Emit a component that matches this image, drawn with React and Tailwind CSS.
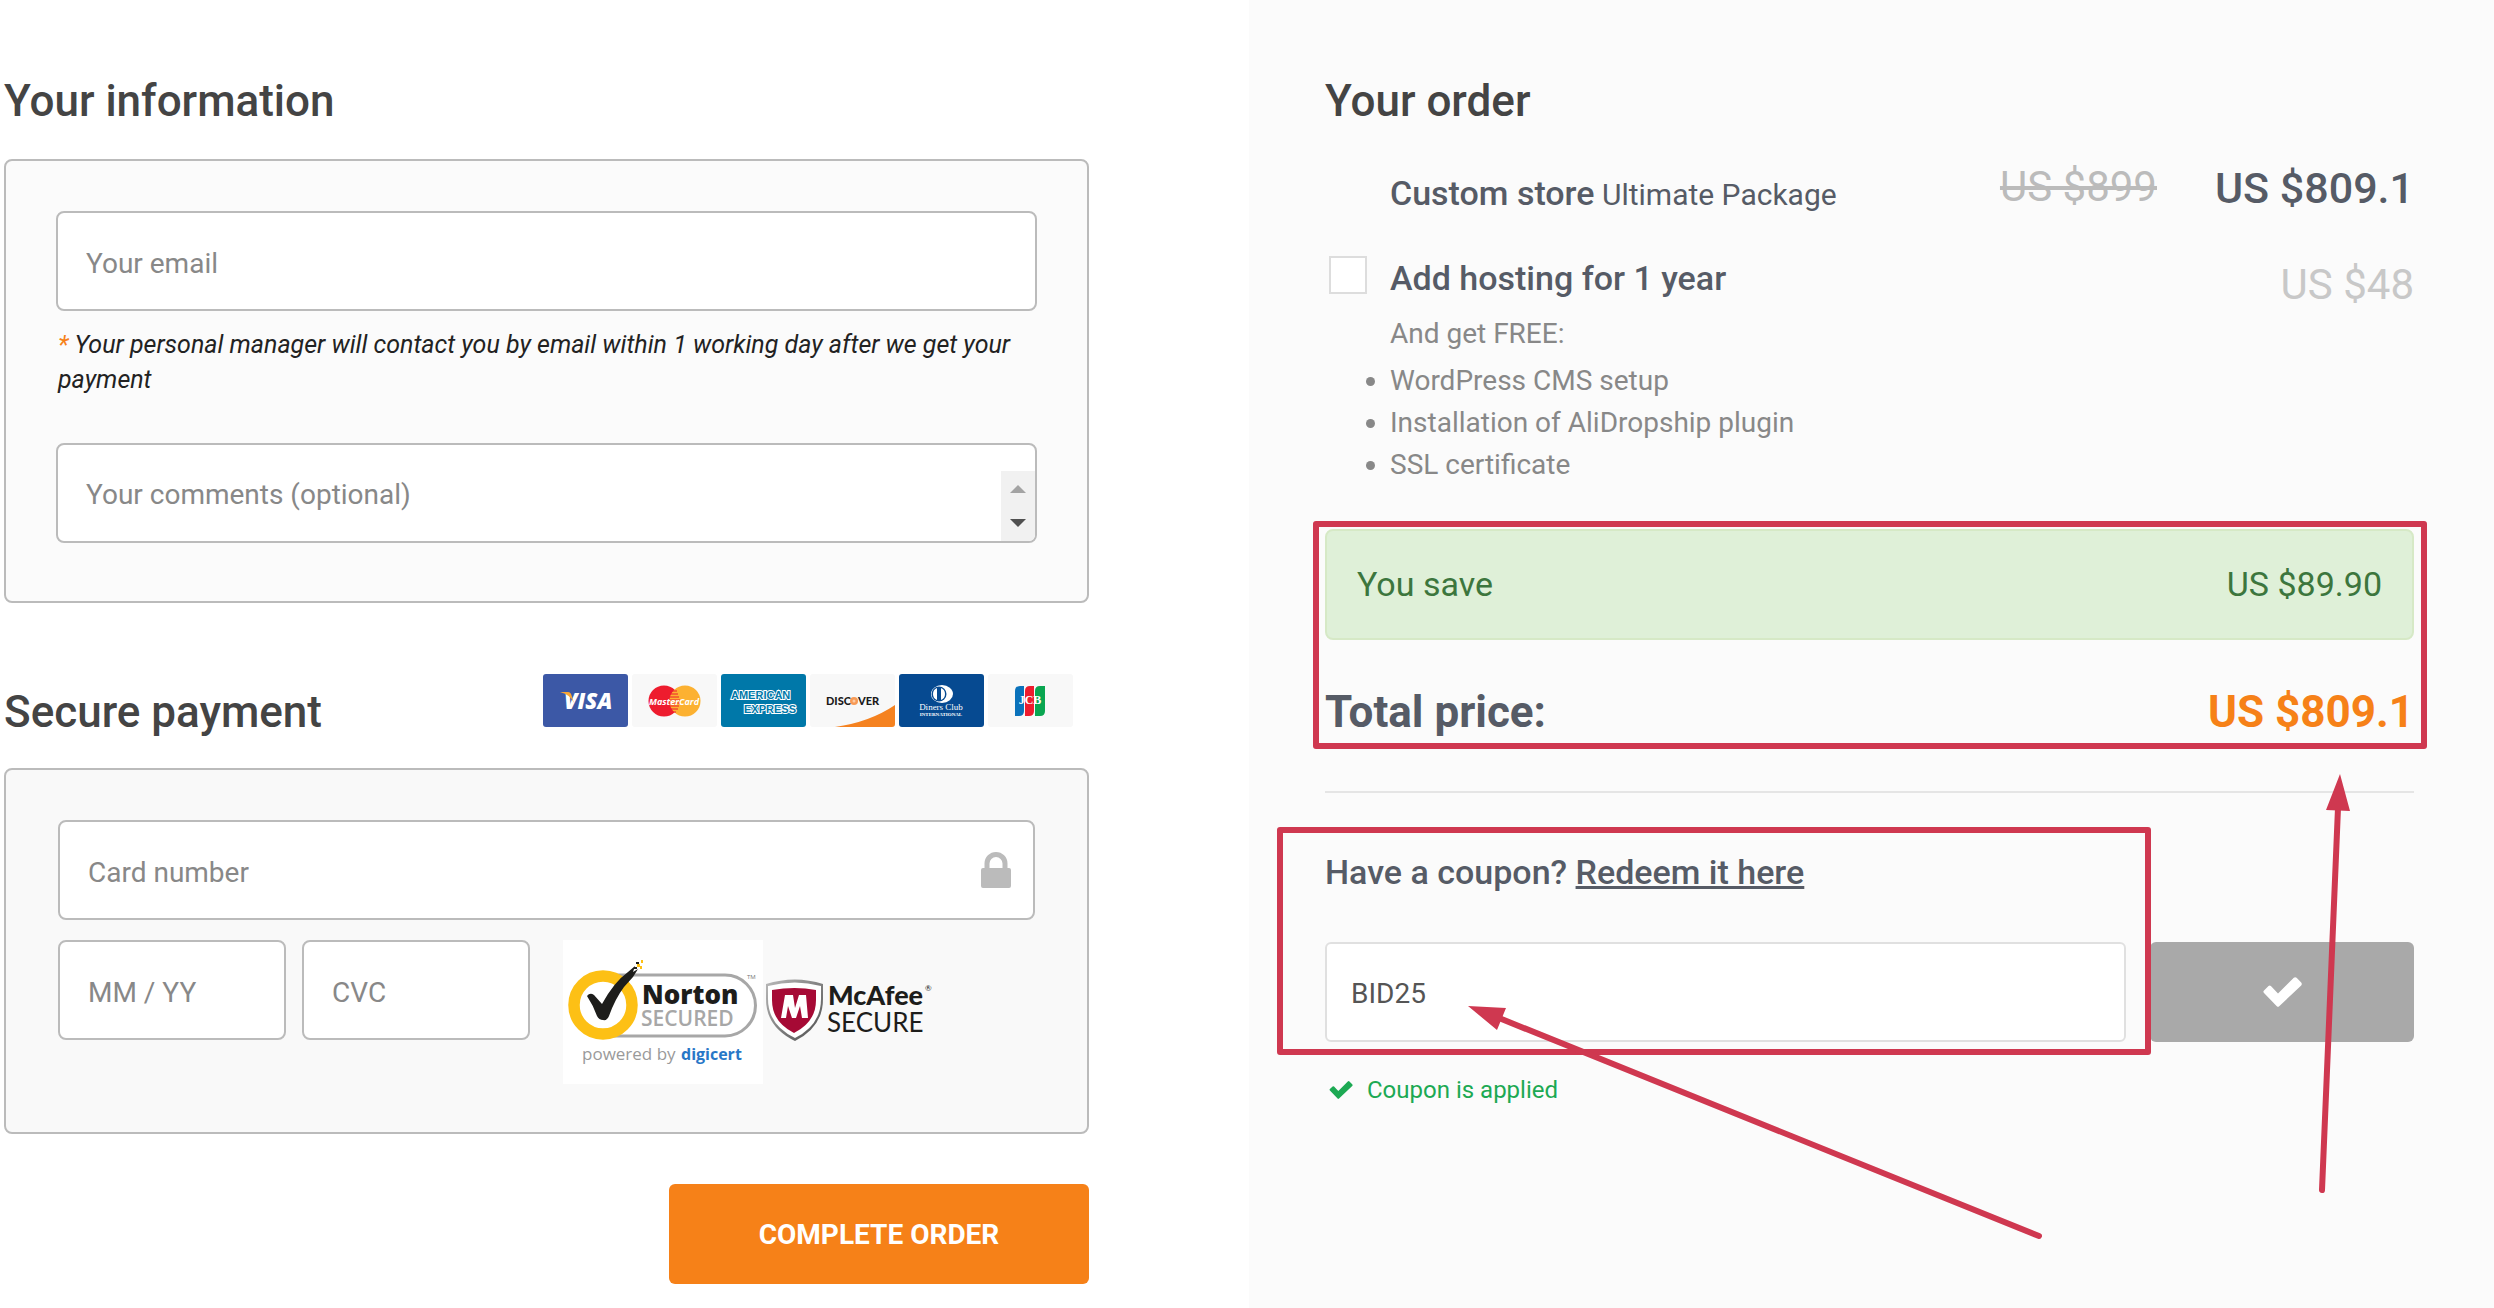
const fieldClass =
  "block w-full h-25 rounded-lg border-2 border-[#bbb] bg-white px-7 pt-1 text-[28px] text-[#555] placeholder:text-[#888] outline-none";

const perks = ["WordPress CMS setup", "Installation of AliDropship plugin", "SSL certificate"];

function Check({ className }) {
  return (
    <svg className={className} viewBox="0 0 39 30" fill="currentColor" aria-hidden="true">
      <path d="M1 13.500l4.500-4.500q1.200-.8 2.400 0l7.100 7.500L30.800.8q1.400-1.200 2.800 0l4.600 4.800q1.200 1.400 0 2.800L16.200 29.300q-1.200 1-2.400 0L1 16q-1.300-1.200 0-2.500z" />
    </svg>
  );
}

function Lock({ className }) {
  return (
    <svg className={className} viewBox="0 0 30 36" fill="currentColor" aria-hidden="true">
      <path d="M2 16h1.500v-4.500a11.500 11.500 0 0 1 23 0V16H28q2 0 2 2v16q0 2-2 2H2q-2 0-2-2V18q0-2 2-2zm6.500 0h13v-4.500a6.500 6.500 0 0 0-13 0z" />
    </svg>
  );
}

function CardLogos() {
  return (
    <div className="mt-px mr-4 flex gap-1">
      <svg className="w-[85px] h-[54px]" viewBox="0 0 85 54" role="img" aria-label="Visa">
        <rect width="85" height="53" rx="3" fill="#3c58a6" />
        <text x="21" y="35" fontFamily="Open Sans, sans-serif" fontWeight="800" fontStyle="italic" fontSize="22" fill="#fff">VISA</text>
        <path d="M17 18h8q3 0 4 5l2 6q-3-8-14-11z" fill="#f9a533" />
      </svg>
      <svg className="w-[85px] h-[54px]" viewBox="0 0 85 54" role="img" aria-label="MasterCard">
        <rect width="85" height="53" rx="3" fill="#f8f8f8" />
        <circle cx="32" cy="27" r="15.500" fill="#ee1c2e" />
        <circle cx="53" cy="27" r="15.500" fill="#fcb131" />
        <path d="M38 17h7M37 20h9M37 23h10M37 26h11M37 29h11M37 32h10M38 35h8M40 38h4" stroke="#ee1c2e" strokeWidth="1" />
        <text x="42" y="31" textAnchor="middle" fontFamily="Open Sans, sans-serif" fontWeight="700" fontStyle="italic" fontSize="9" fill="#fff">MasterCard</text>
      </svg>
      <svg className="w-[85px] h-[54px]" viewBox="0 0 85 54" role="img" aria-label="American Express">
        <rect width="85" height="53" rx="3" fill="#0078a9" />
        <g fontFamily="Liberation Sans, sans-serif" fontWeight="700" fontSize="11" fill="#0078a9" stroke="#fff" strokeWidth="2" paintOrder="stroke">
          <text x="10" y="25">AMERICAN</text>
          <text x="23" y="39">EXPRESS</text>
        </g>
      </svg>
      <svg className="w-[85px] h-[54px]" viewBox="0 0 85 54" role="img" aria-label="Discover">
        <rect width="85" height="53" rx="3" fill="#f8f8f8" />
        <path d="M85 31v19q0 3-3 3H25q35-5 60-22z" fill="#f58220" />
        <g fontFamily="Lato, sans-serif" fontWeight="900" fontSize="11" fill="#1b1b1b">
          <text x="16" y="31">DISC</text>
          <text x="48" y="31">VER</text>
        </g>
        <circle cx="44" cy="27" r="4" fill="#f79a56" />
        <circle cx="44" cy="27" r="1.500" fill="#fccba5" />
      </svg>
      <svg className="w-[85px] h-[54px]" viewBox="0 0 85 54" role="img" aria-label="Diners Club International">
        <rect width="85" height="53" rx="3" fill="#064a91" />
        <ellipse cx="43" cy="20" rx="11" ry="9" fill="#fff" />
        <circle cx="40" cy="20" r="7.500" fill="#064a91" />
        <path d="M38 14a6.500 6.500 0 0 0 0 12zM42 14a6.500 6.500 0 0 1 0 12z" fill="#fff" />
        <text x="42" y="36" textAnchor="middle" fontFamily="Liberation Serif, serif" fontSize="9" fill="#fff">Diners Club</text>
        <text x="42" y="42" textAnchor="middle" fontFamily="Liberation Serif, serif" fontWeight="700" fontSize="5" fill="#fff">INTERNATIONAL</text>
      </svg>
      <svg className="w-[85px] h-[54px]" viewBox="0 0 85 54" role="img" aria-label="JCB">
        <rect width="85" height="53" rx="3" fill="#f8f8f8" />
        <path d="M27 17q0-5 5-5h4v25q0 5-5 5h-4z" fill="#0a72bb" />
        <path d="M37 17q0-5 5-5h4v25q0 5-5 5h-4z" fill="#ee1c2e" />
        <path d="M47 17q0-5 5-5h5v25q0 5-5 5h-5z" fill="#0aa651" />
        <text x="42" y="30" textAnchor="middle" fontFamily="Liberation Serif, serif" fontWeight="700" fontSize="12" fill="#fff">JCB</text>
      </svg>
    </div>
  );
}

function NortonBadge() {
  return (
    <svg className="w-[200px] h-36 shrink-0" viewBox="0 0 200 144" role="img" aria-label="Norton Secured, powered by digicert">
      <rect width="200" height="144" fill="#fff" />
      <path d="M50 35H162a30.500 30.500 0 0 1 0 61H50" fill="none" stroke="#a7a7a7" strokeWidth="3" />
      <circle cx="40" cy="65" r="29" fill="#fff" stroke="#fdc015" strokeWidth="11.500" />
      <path d="M24 56q3-4 7-1l8 9q12-22 26-32l7-6-2 6 5-3-5 8-9 10q-9 12-15 29-2 5-6 4-4 0-6-4-4-11-10-20z" fill="#1d1d1b" />
      <path d="M74 24h3v3h-3zM78 20h2v3h-2zM77 26h2v3h-2z" fill="#fdc015" />
      <path d="M71 27h3v2h-3zM73 22h3v2h-3z" fill="#1d1d1b" />
      <text x="79" y="64" fontFamily="Open Sans, sans-serif" fontWeight="800" fontSize="26" fill="#1d1d1b">Norton</text>
      <text x="78" y="86" fontFamily="Open Sans, sans-serif" fontWeight="600" fontSize="21" fill="#a7a7a7">SECURED</text>
      <text x="184" y="39" fontFamily="Open Sans, sans-serif" fontSize="6" fill="#777">TM</text>
      <text x="19" y="120" fontFamily="Open Sans, sans-serif" fontSize="17" fill="#9a9a9a">powered by</text>
      <text x="118" y="120" fontFamily="Open Sans, sans-serif" fontWeight="700" fontSize="16" fill="#2877c7">digicert</text>
    </svg>
  );
}

function McAfeeBadge() {
  return (
    <svg className="ml-0.5 mb-1 w-[170px] h-[62px] shrink-0" viewBox="0 0 170 62" role="img" aria-label="McAfee Secure">
      <defs>
        <linearGradient id="shield" x1="0" y1="0" x2="1" y2="1">
          <stop offset="0" stopColor="#b9b9b9" />
          <stop offset="1" stopColor="#4c4c4c" />
        </linearGradient>
      </defs>
      <path d="M1 5q29-9 57 0v15q0 28-28 42Q1 48 1 20z" fill="url(#shield)" />
      <path d="M3 7q27-7 53 0v13q0 26-26 39Q3 46 3 20z" fill="#fff" />
      <path d="M7 11q23-4 44 0v10q0 22-22 33Q7 43 7 21z" fill="#a60a35" />
      <path d="M16 39l4-23h8l2 13 4-13h7l2 23h-6l-2-12-4 12h-4l-4-12-2 12z" fill="#fff" />
      <text x="63" y="26" fontFamily="Lato, sans-serif" fontWeight="900" fontSize="27" fill="#1d1d1b">McAfee</text>
      <text x="62" y="53" fontFamily="Lato, sans-serif" fontSize="26" fill="#1d1d1b">SECURE</text>
      <text x="160" y="12" fontFamily="Lato, sans-serif" fontSize="8" fill="#1d1d1b">®</text>
    </svg>
  );
}

// red frames and arrows drawn over the order column
function Annotations() {
  return (
    <svg className="absolute left-0 top-0 w-[1245px] h-[1308px] pointer-events-none" viewBox="0 0 1245 1308" aria-hidden="true">
      <g fill="none" stroke="#cf3850" strokeWidth="6" strokeLinejoin="round" strokeLinecap="round">
        <rect x="67" y="524" width="1108" height="222" />
        <rect x="31" y="830" width="868" height="222" />
        <path d="M250 1018L790 1236" />
        <path d="M1089 808L1073 1190" />
      </g>
      <path d="M219 1006l38 2-9 22zM1091 774l10 37-24-1z" fill="#cf3850" />
    </svg>
  );
}

export default function App() {
  return (
    <div className="flex min-h-screen bg-white font-[Roboto,sans-serif] text-[#444]">
      <main className="w-[calc(50%+2px)] pl-1 pr-40 pt-[73px]">
        <h1 className="text-[44px] leading-[56px] font-medium">Your information</h1>
        <section className="mt-[30px] rounded-lg border-2 border-[#bbb] bg-[#fbfbfb] px-[50px] pt-[50px] pb-[58px]">
          <input type="email" aria-label="Your email" placeholder="Your email" className={fieldClass} />
          <p className="mt-4 px-0.5 text-[25px] leading-[35px] italic text-[#222]">
            <span className="text-[#f68118]">*</span> Your personal manager will contact you by email within 1 working day after we get your payment
          </p>
          <div className="relative mt-[46px]">
            <textarea aria-label="Your comments" placeholder="Your comments (optional)" rows={1} className={`${fieldClass} resize-none overflow-hidden pt-[34px] leading-8`} />
            <div className="absolute right-0.5 bottom-0.5 flex h-[70px] w-[34px] flex-col items-center justify-between rounded-br-md bg-[#f1f1f1] py-3.5" aria-hidden="true">
              <svg width="16" height="8" viewBox="0 0 16 8"><path d="M0 8l8-8 8 8z" fill="#a3a3a3" /></svg>
              <svg width="16" height="8" viewBox="0 0 16 8"><path d="M0 0h16l-8 8z" fill="#505050" /></svg>
            </div>
          </div>
        </section>

        <div className="mt-[70px] flex items-start justify-between">
          <h2 className="mt-[11px] text-[44px] leading-[56px] font-medium">Secure payment</h2>
          <CardLogos />
        </div>
        <section className="mt-7 rounded-lg border-2 border-[#bbb] bg-[#f9f9f9] px-[52px] pt-[50px] pb-12">
          <div className="relative">
            <input aria-label="Card number" placeholder="Card number" className={fieldClass} />
            <Lock className="absolute right-6 top-8 h-9 w-[30px] text-[#bbb]" />
          </div>
          <div className="mt-5 flex items-start">
            <div className="w-[228px]">
              <input aria-label="Expiry date" placeholder="MM / YY" className={fieldClass} />
            </div>
            <div className="ml-4 w-[228px]">
              <input aria-label="CVC" placeholder="CVC" className={fieldClass} />
            </div>
            <div className="ml-[33px] flex items-center">
              <NortonBadge />
              <McAfeeBadge />
            </div>
          </div>
        </section>
        <button type="button" className="mt-[50px] ml-auto block h-25 w-[420px] rounded-md bg-[#f68118] pt-0.5 text-[28px] font-bold text-white">
          COMPLETE ORDER
        </button>
      </main>

      <aside className="relative flex-1 bg-[#fbfbfb] pl-[76px] pr-20 pt-[73px]">
        <h2 className="text-[44px] leading-[56px] font-medium">Your order</h2>

        <div className="mt-7 flex items-start text-[#565b66]">
          <p className="ml-[65px] mt-4 flex-1 text-[30px] leading-10">
            <span className="text-[34px] font-medium">Custom store</span> Ultimate Package
          </p>
          <span className="text-[42px] leading-[60px] text-[#bbb] line-through">US $899</span>
          <span className="ml-[58px] text-[43px] leading-[62px] font-medium">US $809.1</span>
        </div>

        <div className="mt-[33px] flex items-start">
          <input id="hosting" type="checkbox" className="ml-1 mt-1 size-[38px] appearance-none border-2 border-[#ddd] bg-white" />
          <div className="ml-[23px] flex-1 text-[28px] leading-[42px] text-[#888]">
            <label htmlFor="hosting" className="mt-[5px] block text-[34px] leading-[42px] font-medium text-[#565b66]">Add hosting for 1 year</label>
            <p className="mt-3.5">And get FREE:</p>
            <ul className="mt-[5px] list-disc">
              {perks.map((perk) => (
                <li key={perk}>{perk}</li>
              ))}
            </ul>
          </div>
          <span className="mt-[5px] text-[42px] leading-[56px] text-[#c8c8c8]">US $48</span>
        </div>

        <div className="mt-[43px] flex h-[111px] items-center justify-between rounded-lg border-2 border-[#d6e9c6] bg-[#dff0d8] px-[30px] text-[34px] text-[#3c763d]">
          <span>You save</span>
          <span>US $89.90</span>
        </div>
        <div className="flex h-[153px] items-center justify-between border-b-2 border-[#e5e5e5] pb-2 font-bold">
          <span className="text-[44px] text-[#565b66]">Total price:</span>
          <span className="text-[44px] text-[#f68118]">US $809.1</span>
        </div>

        <p className="mt-[59px] text-[34px] leading-10 font-medium text-[#565b66]">
          Have a coupon? <a href="#coupon" className="underline">Redeem it here</a>
        </p>
        <div className="mt-[50px] flex">
          <input id="coupon" aria-label="Coupon code" defaultValue="BID25" className="h-25 min-w-0 flex-1 rounded-md border-2 border-[#e0e0e0] bg-white px-6 pt-0.5 text-[28px] text-[#555] outline-none" />
          <button type="button" aria-label="Apply coupon" className="ml-6 flex h-25 w-[264px] items-center justify-center rounded-md bg-[#a9a9a9] text-white">
            <Check className="h-[30px] w-[39px]" />
          </button>
        </div>
        <p className="mt-8 flex items-center gap-3.5 pl-1 text-2xl leading-8 text-[#1ca953]">
          <Check className="h-[18px] w-6" />
          Coupon is applied
        </p>
        <Annotations />
      </aside>
    </div>
  );
}
